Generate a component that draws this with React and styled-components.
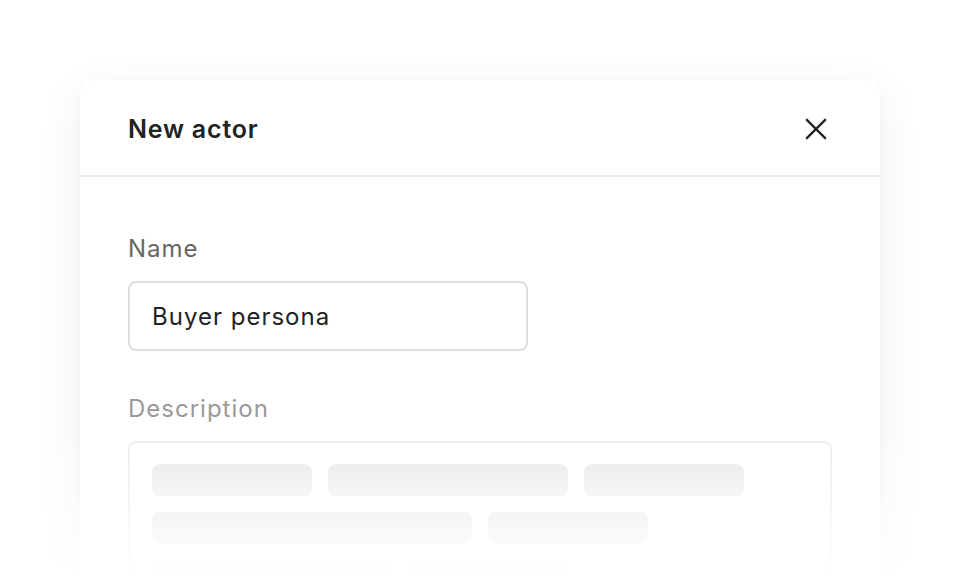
import React from "react";
import styled, { createGlobalStyle } from "styled-components";

const GlobalStyle = createGlobalStyle`
  html, body {
    margin: 0;
    padding: 0;
    background: #ffffff;
    height: 576px;
    overflow: hidden;
  }
  body {
    font-family: Inter, "Noto Sans", "Liberation Sans", sans-serif;
    -webkit-font-smoothing: antialiased;
  }
`;

const rows = [
  [160, 240, 160],
  [320, 160],
  [240, 160],
];

export default function App() {
  return (
    <Page>
      <GlobalStyle />
      <Dialog>
        <Header>
          <Title>New actor</Title>
          <CloseButton aria-label="Close">
            <svg width="24" height="24" viewBox="0 0 24 24" fill="none">
              <path
                d="M2 2L22 22M22 2L2 22"
                stroke="#222"
                strokeWidth="2.5"
                strokeLinecap="round"
              />
            </svg>
          </CloseButton>
        </Header>

        <Body>
          <Field>
            <Label>Name</Label>
            <Input defaultValue="Buyer persona" />
          </Field>

          <Field>
            <Label $muted>Description</Label>
            <TextArea>
              {rows.map((row, i) => (
                <SkeletonRow key={i}>
                  {row.map((w, j) => (
                    <Bar key={j} style={{ width: w }} />
                  ))}
                </SkeletonRow>
              ))}
            </TextArea>
          </Field>
        </Body>
      </Dialog>
      <Fade />
    </Page>
  );
}

const Page = styled.div`
  position: relative;
  height: 576px;
  padding: 80px 80px 0;
  box-sizing: border-box;
  overflow: hidden;
`;

const Dialog = styled.div`
  width: 800px;
  background: #fff;
  border-radius: 16px;
  box-shadow: 0 10px 44px rgba(0, 0, 0, 0.07), 0 2px 8px rgba(0, 0, 0, 0.02);
`;

const Header = styled.div`
  height: 97px;
  display: flex;
  align-items: center;
  justify-content: space-between;
  padding: 2px 52px 0 48px;
  border-bottom: 2px solid #ececec;
  box-sizing: border-box;
`;

const Title = styled.h2`
  margin: 0;
  font-size: 25px;
  font-weight: 600;
  color: #222;
  letter-spacing: 0.8px;
`;

const CloseButton = styled.button`
  border: none;
  background: none;
  padding: 0;
  width: 24px;
  height: 24px;
  display: flex;
  cursor: pointer;
  svg {
    width: 22px;
    height: 22px;
    margin: 1px;
  }
`;

const Body = styled.div`
  padding: 58px 48px 40px;
  display: flex;
  flex-direction: column;
  gap: 44px;
`;

const Field = styled.div`
  display: flex;
  flex-direction: column;
  gap: 18px;
`;

const Label = styled.label`
  font-size: 24px;
  line-height: 28px;
  letter-spacing: 1px;
  color: ${(p) => (p.$muted ? "#999" : "#666")};
`;

const Input = styled.input`
  width: 400px;
  height: 70px;
  box-sizing: border-box;
  border: 2px solid #dedede;
  border-radius: 8px;
  padding: 0 22px;
  font-family: inherit;
  font-size: 24px;
  letter-spacing: 1px;
  color: #222;
  outline: none;
`;

const TextArea = styled.div`
  width: 704px;
  box-sizing: border-box;
  border: 2px solid #ececec;
  border-radius: 8px;
  padding: 21px 22px;
  display: flex;
  flex-direction: column;
  gap: 16px;
`;

const SkeletonRow = styled.div`
  display: flex;
  gap: 16px;
`;

const Bar = styled.div`
  height: 32px;
  border-radius: 8px;
  background: linear-gradient(180deg, #e8e8e8, #eeeeee);
`;

const Fade = styled.div`
  position: absolute;
  left: 0;
  right: 0;
  bottom: 0;
  height: 150px;
  pointer-events: none;
  background: linear-gradient(
    180deg,
    rgba(255, 255, 255, 0) 0%,
    rgba(255, 255, 255, 0.5) 55%,
    #ffffff 100%
  );
`;
